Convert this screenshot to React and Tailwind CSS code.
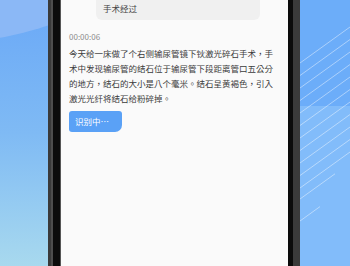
export default function App() {
  // diagonal stripes on the right backdrop
  const stripes = [
    [0, 63, 50],
    [0, 75.5, 50],
    [0, 88, 50],
    [0, 100.5, 50],
    [0, 113, 50],
    [0, 125.5, 50],
    [0, 138, 50],
    [0, 150.5, 50],
    [0, 163, 50],
    [0, 175.5, 50],
    [0, 188, 50],
    [0, 199, 35],
    [0, 221, 20],
  ]

  return (
    <div className="flex w-[350px] h-[266px] overflow-hidden font-['Noto_Sans_CJK_TC','Noto_Sans',sans-serif] [text-spacing-trim:space-all]">
      {/* Left backdrop */}
      <div className="relative w-[48px] h-full overflow-hidden bg-gradient-to-b from-[#6aa8f7] via-[#7fbaf4] to-[#a8d9ee]">
        <div className="absolute left-[-403px] top-[-643px] w-[686px] h-[686px] rounded-full bg-[#8bb8f6]" />
      </div>

      {/* Phone */}
      <div className="flex h-full">
        <div className="w-[3px] bg-[#3a3a3a]" />
        <div className="w-[2px] bg-[#4d4d4d]" />
        <div className="w-[7px] bg-[#0b0b0b]" />
        <div className="w-[1px] bg-[#555]" />

        {/* Screen */}
        <div className="w-[227px] h-full overflow-hidden bg-[#fafafa] pl-[8px]">
          <div className="ml-[27px] mt-[-22px] w-[164px] rounded-b-[6px] bg-[#f0f0f0] px-[7px] pt-[8px] pb-[4px] text-[8.5px] leading-[15px] text-[#444]">
            <p>患者右侧腰痛一周余，入院检查</p>
            <p>手术经过</p>
          </div>

          <p className="mt-[11px] text-[8px] leading-[12px] text-[#8c8c8c]">00:00:06</p>

          <p className="mt-[3px] w-[208px] text-[8.5px] leading-[15px] text-[#3a3a3a]">
            今天给一床做了个右侧输尿管镜下钬激光碎石手术，手术中发现输尿管的结石位于输尿管下段距离管口五公分的地方，结石的大小是八个毫米。结石呈黄褐色，引入激光光纤将结石给粉碎掉。
          </p>

          <button className="mt-[5px] flex h-[21px] w-[53px] items-center rounded-[3px] rounded-br-[7px] bg-[#5aa1f6] pl-[6px] text-[8.5px] text-white">
            识别中…
          </button>
        </div>

        <div className="w-[5px] bg-[#0b0b0b]" />
        <div className="relative w-[7px] bg-[#3a3a3a]">
          <div className="absolute right-[-2px] top-0 h-[27px] w-[2px] bg-[#333]" />
        </div>
      </div>

      {/* Right backdrop */}
      <div className="relative flex-1 h-full overflow-hidden bg-[#6cadf9]">
        <div className="absolute left-0 right-0 top-[106px] bottom-0 bg-[#82bcfa]" />
        <svg className="absolute left-0 top-0" width="50" height="266" viewBox="0 0 50 266">
          {stripes.map(([x0, y0, x1], i) => (
            <line
              key={i}
              x1={x0}
              y1={y0}
              x2={x1}
              y2={y0 - (x1 - x0) * 0.72}
              stroke="#ffffff"
              strokeOpacity="0.55"
              strokeWidth="0.8"
            />
          ))}
        </svg>
      </div>
    </div>
  )
}
